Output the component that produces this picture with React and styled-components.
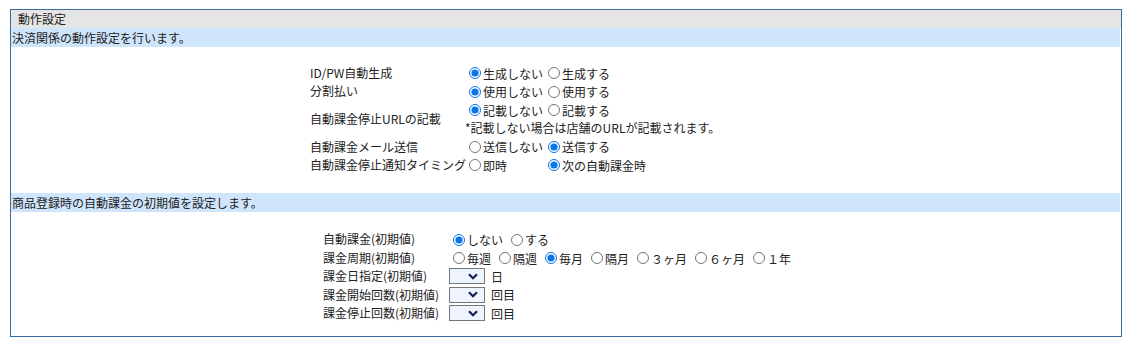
import styled, { createGlobalStyle } from 'styled-components';

const GlobalStyle = createGlobalStyle`
  body {
    margin: 0;
    background: #fff;
    font-family: "Noto Sans CJK JP", "Noto Sans", sans-serif;
    font-size: 12px;
    color: #222;
  }
`;

const chevron =
  "data:image/svg+xml,%3csvg xmlns='http://www.w3.org/2000/svg' width='10' height='7' viewBox='0 0 10 7'%3e%3cpath d='M1 1.2 L5 5.2 L9 1.2' fill='none' stroke='%231d1d4f' stroke-width='2.2'/%3e%3c/svg%3e";

const Page = styled.div`
  padding: 9px 0 0 10px;
`;

const Panel = styled.div`
  width: 1110px;
  height: 326px;
  border: 1px solid #3a6aa3;
`;

const Title = styled.div`
  height: 18px;
  line-height: 18px;
  padding-left: 7px;
  background: #e5e5e5;
`;

const Lead = styled.div`
  height: 19px;
  line-height: 19px;
  padding-left: 1px;
  margin-right: 1px;
  background: #cfe5fc;
`;

const Section = styled.div`
  padding: ${(p) => p.$pad};
`;

const Form = styled.div`
  display: grid;
  grid-template-columns: ${(p) => p.$labelW}px auto;
  justify-content: start;
  align-items: center;
  margin-left: ${(p) => p.$left}px;
`;

const Label = styled.div`
  line-height: 18.4px;
  white-space: nowrap;
`;

const Value = styled.div`
  display: flex;
  flex-direction: column;
`;

const Options = styled.div`
  display: flex;
  align-items: center;
  height: ${(p) => p.$h || 18.4}px;
  white-space: nowrap;
`;

const Option = styled.label`
  display: inline-flex;
  align-items: center;
  width: ${(p) => (p.$w ? `${p.$w}px` : 'auto')};
  margin-right: ${(p) => (p.$w ? 0 : 4)}px;
`;

const Radio = styled.input.attrs({ type: 'radio' })`
  width: 12px;
  height: 12px;
  margin: 0 2px 0 4px;
  accent-color: #0a75e8;
`;

const Note = styled.div`
  line-height: 18.4px;
  white-space: nowrap;
`;

const Select = styled.select`
  appearance: none;
  width: 36px;
  height: 16px;
  margin: 0 6px 0 0;
  border: 1px solid #767676;
  border-radius: 0;
  background: #eef4fd url("${chevron}") no-repeat right 6px center;
  background-size: 10px 7px;
`;

const RadioRow = ({ name, options, checked, width }) => (
  <Options>
    {options.map((o, i) => (
      <Option key={o} $w={width}>
        <Radio name={name} defaultChecked={i === checked} />
        {o}
      </Option>
    ))}
  </Options>
);

const SelectRow = ({ unit }) => (
  <Options $h={17.5}>
    <Select defaultValue="" />
    {unit}
  </Options>
);

export default function App() {
  return (
    <Page>
      <GlobalStyle />
      <Panel>
        <Title>動作設定</Title>
        <Lead>決済関係の動作設定を行います。</Lead>
        <Section $pad="17px 0 19px">
          <Form $labelW={155} $left={299}>
            <Label>ID/PW自動生成</Label>
            <RadioRow name="idpw" options={['生成しない', '生成する']} checked={0} width={79} />
            <Label>分割払い</Label>
            <RadioRow name="split" options={['使用しない', '使用する']} checked={0} width={79} />
            <Label>自動課金停止URLの記載</Label>
            <Value>
              <RadioRow name="url" options={['記載しない', '記載する']} checked={0} width={79} />
              <Note>*記載しない場合は店舗のURLが記載されます。</Note>
            </Value>
            <Label>自動課金メール送信</Label>
            <RadioRow name="mail" options={['送信しない', '送信する']} checked={1} width={79} />
            <Label>自動課金停止通知タイミング</Label>
            <RadioRow name="timing" options={['即時', '次の自動課金時']} checked={1} width={79} />
          </Form>
        </Section>
        <Lead>商品登録時の自動課金の初期値を設定します。</Lead>
        <Section $pad="18px 0 0">
          <Form $labelW={126} $left={312}>
            <Label>自動課金(初期値)</Label>
            <RadioRow name="auto" options={['しない', 'する']} checked={0} />
            <Label>課金周期(初期値)</Label>
            <RadioRow
              name="cycle"
              options={['毎週', '隔週', '毎月', '隔月', '３ヶ月', '６ヶ月', '１年']}
              checked={2}
            />
            <Label>課金日指定(初期値)</Label>
            <SelectRow unit="日" />
            <Label>課金開始回数(初期値)</Label>
            <SelectRow unit="回目" />
            <Label>課金停止回数(初期値)</Label>
            <SelectRow unit="回目" />
          </Form>
        </Section>
      </Panel>
    </Page>
  );
}
